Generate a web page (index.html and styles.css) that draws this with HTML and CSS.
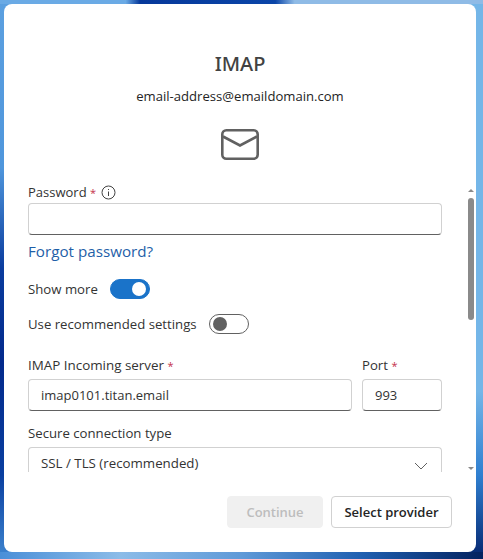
FILE: index.html
```html
<!DOCTYPE html>
<html>
<head>
  <meta charset="utf-8"/>
  <link rel="stylesheet" href="styles.css">
</head>
<body>
  <div class="dialog">
    <div class="header">
      <h1>IMAP</h1>
      <div class="address">email-address@emaildomain.com</div>
      <svg class="mail-icon" width="38" height="31" viewBox="0 0 38 31" fill="none" stroke="#616161" stroke-width="2.6">
        <rect x="1.3" y="1.3" width="35.4" height="28.4" rx="4"/>
        <path d="M2 7.5 L19 16.5 L36 7.5"/>
      </svg>
    </div>

    <div class="scroll-area">
      <div class="form">
        <div class="label-row">
          <label>Password <span class="req">*</span></label>
          <svg class="info" width="15" height="15" viewBox="0 0 15 15" fill="none" stroke="#424242">
            <circle cx="7.5" cy="7.5" r="6.5"/>
            <path d="M7.5 6.5 V11"/>
            <path d="M7.5 4 V5"/>
          </svg>
        </div>
        <div class="input password"></div>
        <a class="forgot">Forgot password?</a>

        <div class="toggle-row show-more">
          <span>Show more</span>
          <span class="toggle on"><span class="knob"></span></span>
        </div>
        <div class="toggle-row recommended">
          <span>Use recommended settings</span>
          <span class="toggle"><span class="knob"></span></span>
        </div>

        <div class="server-row">
          <div class="field grow">
            <label class="server-label">IMAP Incoming server <span class="req">*</span></label>
            <div class="input">imap0101.titan.email</div>
          </div>
          <div class="field port">
            <label>Port <span class="req">*</span></label>
            <div class="input">993</div>
          </div>
        </div>

        <div class="field secure">
          <label>Secure connection type</label>
          <div class="input select">
            <span>SSL / TLS (recommended)</span>
            <svg width="14" height="8" viewBox="0 0 14 8" fill="none" stroke="#616161">
              <path d="M1 1 L7 7 L13 1"/>
            </svg>
          </div>
        </div>
      </div>

      <div class="scrollbar">
        <span class="arrow up"></span>
        <span class="thumb"></span>
        <span class="arrow down"></span>
      </div>
    </div>

    <div class="footer">
      <button class="btn disabled">Continue</button>
      <button class="btn provider">Select provider</button>
    </div>
  </div>
</body>
</html>
```

FILE: styles.css
```css
html, body {
  height: 100%;
}
body {
  margin: 0;
  padding: 4px 7px 7px 4px;
  box-sizing: border-box;
  overflow: hidden;
  font-family: "Open Sans", "Noto Sans", sans-serif;
  color: #333;
  background:
    linear-gradient(90deg, #6aaae5 0, #6aaae5 26%, #06389a 29%, #0a45a8 57%, #8fbbe6 61%, #8fbbe6 100%) top / 100% 4px no-repeat,
    linear-gradient(90deg, #4a8fd8 0, #8cbce8 25%, #5f9ad8 50%, #1f5fb0 75%, #04225f 100%) bottom / 100% 7px no-repeat,
    linear-gradient(180deg, #5ca0e0 0, #4f96dc 30%, #0a3c9e 48%, #032a8c 65%, #0a3fa0 85%, #3f86d0 100%) left / 50% 100% no-repeat,
    linear-gradient(180deg, #74b6e8 0, #74b6e8 70%, #2f7fd0 85%, #04256e 100%) right / 50% 100% no-repeat;
}
.dialog {
  height: 548px;
  background: #fff;
  border-radius: 8px;
  display: flex;
  flex-direction: column;
}
.header {
  height: 178px;
  flex: none;
  text-align: center;
  box-sizing: border-box;
  padding-top: 46px;
}
h1 {
  margin: 0;
  font-family: "Noto Sans", sans-serif;
  font-size: 20px;
  line-height: 27px;
  font-weight: 500;
  color: #424242;
}
.address {
  margin-top: 9px;
  font-size: 13.1px;
  line-height: 20px;
  color: #242424;
}
.mail-icon {
  display: block;
  margin: 23px auto 0;
}
.scroll-area {
  height: 290px;
  flex: none;
  display: flex;
  overflow: hidden;
}
.form {
  width: 414px;
  margin-left: 24px;
  flex: none;
}
label, .toggle-row {
  font-size: 13.2px;
  line-height: 20px;
}
.server-label {
  font-size: 13.4px;
}
.req {
  font-size: 11px;
  line-height: 1;
  color: #c4314b;
}
.label-row {
  display: flex;
  align-items: center;
  gap: 5px;
}
.label-row label {
  font-size: 13px;
}
.input {
  height: 32px;
  box-sizing: border-box;
  border: 1px solid #d1d1d1;
  border-bottom-color: #616161;
  border-radius: 4px;
  padding: 0 12px;
  font-size: 13px;
  line-height: 30px;
}
.password {
  margin-top: 1px;
}
.forgot {
  display: block;
  margin-top: 5px;
  font-size: 15.2px;
  line-height: 22px;
  color: #1f5fa8;
}
.toggle-row {
  display: flex;
  align-items: center;
  gap: 12px;
}
.show-more {
  margin-top: 17px;
}
.recommended {
  margin-top: 15px;
}
.toggle {
  width: 40px;
  height: 20px;
  box-sizing: border-box;
  border: 1px solid #616161;
  border-radius: 10px;
  display: flex;
  align-items: center;
  padding: 0 3px;
}
.knob {
  width: 14px;
  height: 14px;
  border-radius: 50%;
  background: #616161;
}
.toggle.on {
  background: #1a73c9;
  border-color: #1a73c9;
  justify-content: flex-end;
}
.toggle.on .knob {
  background: #fff;
}
.server-row {
  display: flex;
  gap: 10px;
  margin-top: 21px;
}
.field label {
  display: block;
  margin-bottom: 4px;
}
.grow {
  flex: 1;
}
.port {
  width: 80px;
}
.secure {
  margin-top: 12px;
}
.select {
  display: flex;
  align-items: center;
  justify-content: space-between;
  border-bottom: none;
  padding: 0 13px 2px 12px;
  font-size: 13.3px;
  line-height: 28px;
}
.select svg {
  margin-top: 6px;
}
.scrollbar {
  width: 8px;
  margin-left: 25px;
  flex: none;
  display: flex;
  flex-direction: column;
  align-items: center;
}
.thumb {
  width: 6px;
  height: 122px;
  margin-top: 6px;
  border-radius: 3px;
  background: #8a8a8a;
}
.arrow {
  width: 0;
  height: 0;
  border-left: 3px solid transparent;
  border-right: 3px solid transparent;
}
.arrow.up {
  margin-top: 7px;
  border-bottom: 3px solid #8a8a8a;
}
.arrow.down {
  margin-top: 147px;
  border-top: 3px solid #8a8a8a;
}
.footer {
  display: flex;
  justify-content: flex-end;
  gap: 8px;
  padding: 24px 24px 0 0;
}
.btn {
  height: 32px;
  padding: 0 12px;
  box-sizing: border-box;
  border: 1px solid #d1d1d1;
  border-radius: 4px;
  background: #fff;
  font-family: inherit;
  font-size: 13px;
  font-weight: 600;
  color: #242424;
}
.provider {
  width: 121px;
  padding: 0;
}
.btn.disabled {
  width: 96px;
  border-color: #f0f0f0;
  background: #f0f0f0;
  color: #bdbdbd;
}
```
